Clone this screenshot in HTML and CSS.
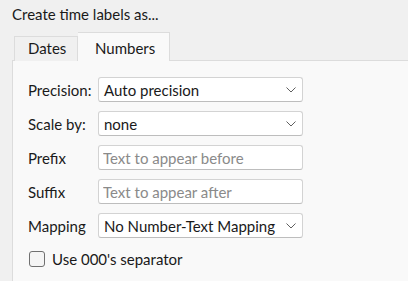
FILE: index.html
```html
<!DOCTYPE html>
<html lang="en">
<head>
  <meta charset="UTF-8" />
  <title>Time labels</title>
  <link rel="stylesheet" href="styles.css">
</head>
<body>

  <div class="title">Create time labels as...</div>

  <div class="tabs">
    <div class="tab">Dates</div>
    <div class="tab active">Numbers</div>
  </div>

  <div class="panel">
    <div class="row">
      <label>Precision:</label>
      <div class="select">Auto precision
        <svg class="chevron" width="10" height="6" viewBox="0 0 10 6"><polyline points="0.5,0.5 5,5 9.5,0.5" /></svg>
      </div>
    </div>
    <div class="row">
      <label>Scale by:</label>
      <div class="select">none
        <svg class="chevron" width="10" height="6" viewBox="0 0 10 6"><polyline points="0.5,0.5 5,5 9.5,0.5" /></svg>
      </div>
    </div>
    <div class="row">
      <label>Prefix</label>
      <input type="text" placeholder="Text to appear before" />
    </div>
    <div class="row">
      <label>Suffix</label>
      <input type="text" placeholder="Text to appear after" />
    </div>
    <div class="row">
      <label>Mapping</label>
      <div class="select">No Number-Text Mapping
        <svg class="chevron" width="10" height="6" viewBox="0 0 10 6"><polyline points="0.5,0.5 5,5 9.5,0.5" /></svg>
      </div>
    </div>
    <div class="check">
      <span class="box"></span>
      Use 000's separator
    </div>
  </div>

</body>
</html>
```

FILE: styles.css
```css
body {
  margin: 0;
  background: #f0f0f0;
  font-family: 'Lato', sans-serif;
  font-size: 15px;
  color: #1a1a1a;
  height: 281px;
  overflow: hidden;
}

.title {
  padding: 4px 12px 0;
  line-height: 20px;
}

.tabs {
  display: flex;
  align-items: flex-end;
  margin: 8px 0 -1px 14px;
  position: relative;
}

.tab {
  box-sizing: border-box;
  width: 64px;
  height: 25px;
  padding: 1px 0 0 13px;
  line-height: 20px;
  border: 1px solid #dcdcdc;
  border-bottom: none;
  background: #f0f0f0;
}

.tab.active {
  width: 92px;
  height: 29px;
  padding: 5px 0 0 17px;
  border-left: none;
  background: #f9f9f9;
}

.panel {
  box-sizing: border-box;
  height: 221px;
  margin: 0 -10px 0 12px;
  padding: 16px 15px 0;
  background: #f9f9f9;
  border: 1px solid #dcdcdc;
  border-bottom: none;
}

.row {
  display: flex;
  align-items: center;
  margin-bottom: 9px;
}

.row label {
  width: 70px;
}

.select,
.row input {
  box-sizing: border-box;
  width: 205px;
  height: 25px;
  margin: 0;
  padding: 0 0 0 5px;
  background: #fff;
  border: 1px solid #d3d3d3;
  border-bottom-color: #bdbdbd;
  border-radius: 3px;
  font-family: inherit;
  font-size: inherit;
  color: inherit;
  display: flex;
  align-items: center;
  position: relative;
  outline: none;
}

.row input {
  padding-left: 4px;
}

.row input::placeholder {
  color: #8a8a8a;
}

.chevron {
  position: absolute;
  right: 6px;
  top: 9px;
  fill: none;
  stroke: #5f5f5f;
  stroke-width: 1;
}

.check {
  display: flex;
  align-items: center;
  margin-top: 13px;
  line-height: 16px;
}

.check .box {
  box-sizing: border-box;
  width: 16px;
  height: 16px;
  border: 1px solid #707070;
  border-radius: 3px;
  background: #f5f5f5;
  margin: 0 7px 0 1px;
}
```
